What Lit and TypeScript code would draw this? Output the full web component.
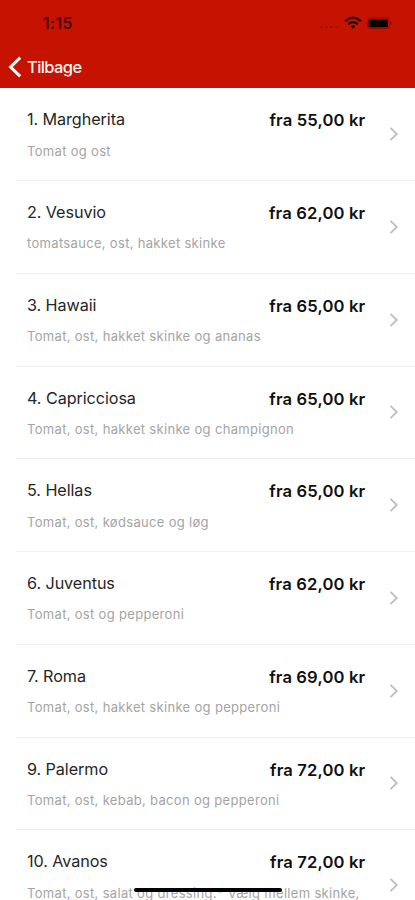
import { LitElement, html, css } from "lit";
import { customElement, property } from "lit/decorators.js";

interface Dish {
  name: string;
  price: string;
  info: string;
}

const DISHES: Dish[] = [
  { name: "1. Margherita", price: "fra 55,00 kr", info: "Tomat og ost" },
  { name: "2. Vesuvio", price: "fra 62,00 kr", info: "tomatsauce, ost, hakket skinke" },
  { name: "3. Hawaii", price: "fra 65,00 kr", info: "Tomat, ost, hakket skinke og ananas" },
  { name: "4. Capricciosa", price: "fra 65,00 kr", info: "Tomat, ost, hakket skinke og champignon" },
  { name: "5. Hellas", price: "fra 65,00 kr", info: "Tomat, ost, kødsauce og løg" },
  { name: "6. Juventus", price: "fra 62,00 kr", info: "Tomat, ost og pepperoni" },
  { name: "7. Roma", price: "fra 69,00 kr", info: "Tomat, ost, hakket skinke og pepperoni" },
  { name: "9. Palermo", price: "fra 72,00 kr", info: "Tomat, ost, kebab, bacon og pepperoni" },
  { name: "10. Avanos", price: "fra 72,00 kr", info: "Tomat, ost, salat og dressing.* Vælg mellem skinke," },
];

@customElement("dish-row")
export class DishRow extends LitElement {
  @property({ attribute: false }) dish!: Dish;
  @property({ type: Boolean, reflect: true }) tall = false;

  static styles = css`
    :host {
      display: flex;
      align-items: center;
      box-sizing: border-box;
      height: 92.75px;
      margin-left: 16px;
      padding: 0 16px 0 11px;
      border-bottom: 1px solid #efefef;
    }
    :host([tall]) {
      height: 111px;
    }
    .body {
      flex: 1;
      align-self: stretch;
      min-width: 0;
      padding-top: 19px;
    }
    .top {
      display: flex;
      justify-content: space-between;
      height: 24px;
      line-height: 24px;
    }
    .name {
      font-size: 16.2px;
      color: #262626;
      letter-spacing: -0.08px;
    }
    .price {
      margin-right: 23.8px;
      padding-top: 1px;
      font-size: 16.6px;
      font-weight: 600;
      letter-spacing: 0.14px;
      color: #101010;
    }
    .info {
      margin-top: 9.4px;
      font-size: 13px;
      line-height: 20px;
      color: #a4a4a4;
      white-space: nowrap;
      letter-spacing: 0.32px;
    }
    .arrow {
      flex: none;
      width: 10px;
      height: 16px;
    }
  `;

  render() {
    return html`
      <div class="body">
        <div class="top">
          <span class="name">${this.dish.name}</span>
          <span class="price">${this.dish.price}</span>
        </div>
        <div class="info">${this.dish.info}</div>
      </div>
      <svg class="arrow" viewBox="0 0 10 16">
        <path d="M1.5 1.8 L7.8 8 L1.5 14.2" fill="none" stroke="#bebebe" stroke-width="1.8" />
      </svg>
    `;
  }
}

@customElement("app-root")
export class AppRoot extends LitElement {
  static styles = css`
    :host {
      display: block;
      position: relative;
      height: 900px;
      overflow: hidden;
      background: #fff;
      font-family: Inter, "Liberation Sans", sans-serif;
    }
    .header {
      height: 88.3px;
      background: #c61200;
      display: flex;
      flex-direction: column;
    }
    .status {
      display: flex;
      align-items: center;
      height: 46px;
      padding: 0 21px 0 43px;
      color: #480500;
    }
    .time {
      flex: 1;
      font-size: 15.5px;
      font-weight: 600;
      letter-spacing: 0.5px;
    }
    .indicators {
      width: 75px;
      height: 16px;
    }
    .back {
      display: flex;
      align-items: center;
      gap: 5px;
      height: 41px;
      padding-left: 8px;
      color: #fff5f2;
      font-size: 16.5px;
      font-weight: 500;
      letter-spacing: -0.6px;
    }
    .chevron {
      width: 14px;
      height: 22px;
    }
    .home {
      position: absolute;
      left: 134px;
      top: 888px;
      width: 148px;
      height: 4px;
      border-radius: 2px;
      background: #000;
    }
  `;

  render() {
    return html`
      <div class="header">
        <div class="status">
          <span class="time">1:15</span>
          <svg class="indicators" viewBox="0 0 75 16">
            <g fill="#a81000">
              <rect x="1" y="11" width="3" height="2" rx="1" />
              <rect x="6" y="11" width="3" height="2" rx="1" />
              <rect x="11" y="11" width="3" height="2" rx="1" />
              <rect x="16" y="11" width="3" height="2" rx="1" />
            </g>
            <g fill="none" stroke="#1c0200" stroke-width="2.2">
              <path d="M26.2 6.1 Q34 -0.7 41.8 6.1" />
              <path d="M29.2 9.2 Q34 5.2 38.8 9.2" />
            </g>
            <path d="M31.6 11.3 Q34 9.4 36.4 11.3 L34 13.8 Z" fill="#1c0200" />
            <rect x="48.8" y="2.8" width="21.4" height="10.6" rx="2.6" fill="none" stroke="#8f0c00" />
            <rect x="49.6" y="4" width="19.4" height="8.2" rx="1" fill="#080000" />
            <path d="M71.5 6 Q74.6 8 71.5 10.2 Z" fill="#8f0c00" />
          </svg>
        </div>
        <div class="back">
          <svg class="chevron" viewBox="0 0 14 22">
            <path d="M12.2 1.7 L2.6 11 L12.2 20.3" fill="none" stroke="#fff" stroke-width="3" />
          </svg>
          <span>Tilbage</span>
        </div>
      </div>
      ${DISHES.map((d, i) => html`<dish-row .dish=${d} ?tall=${i === DISHES.length - 1}></dish-row>`)}
      <div class="home"></div>
    `;
  }
}
